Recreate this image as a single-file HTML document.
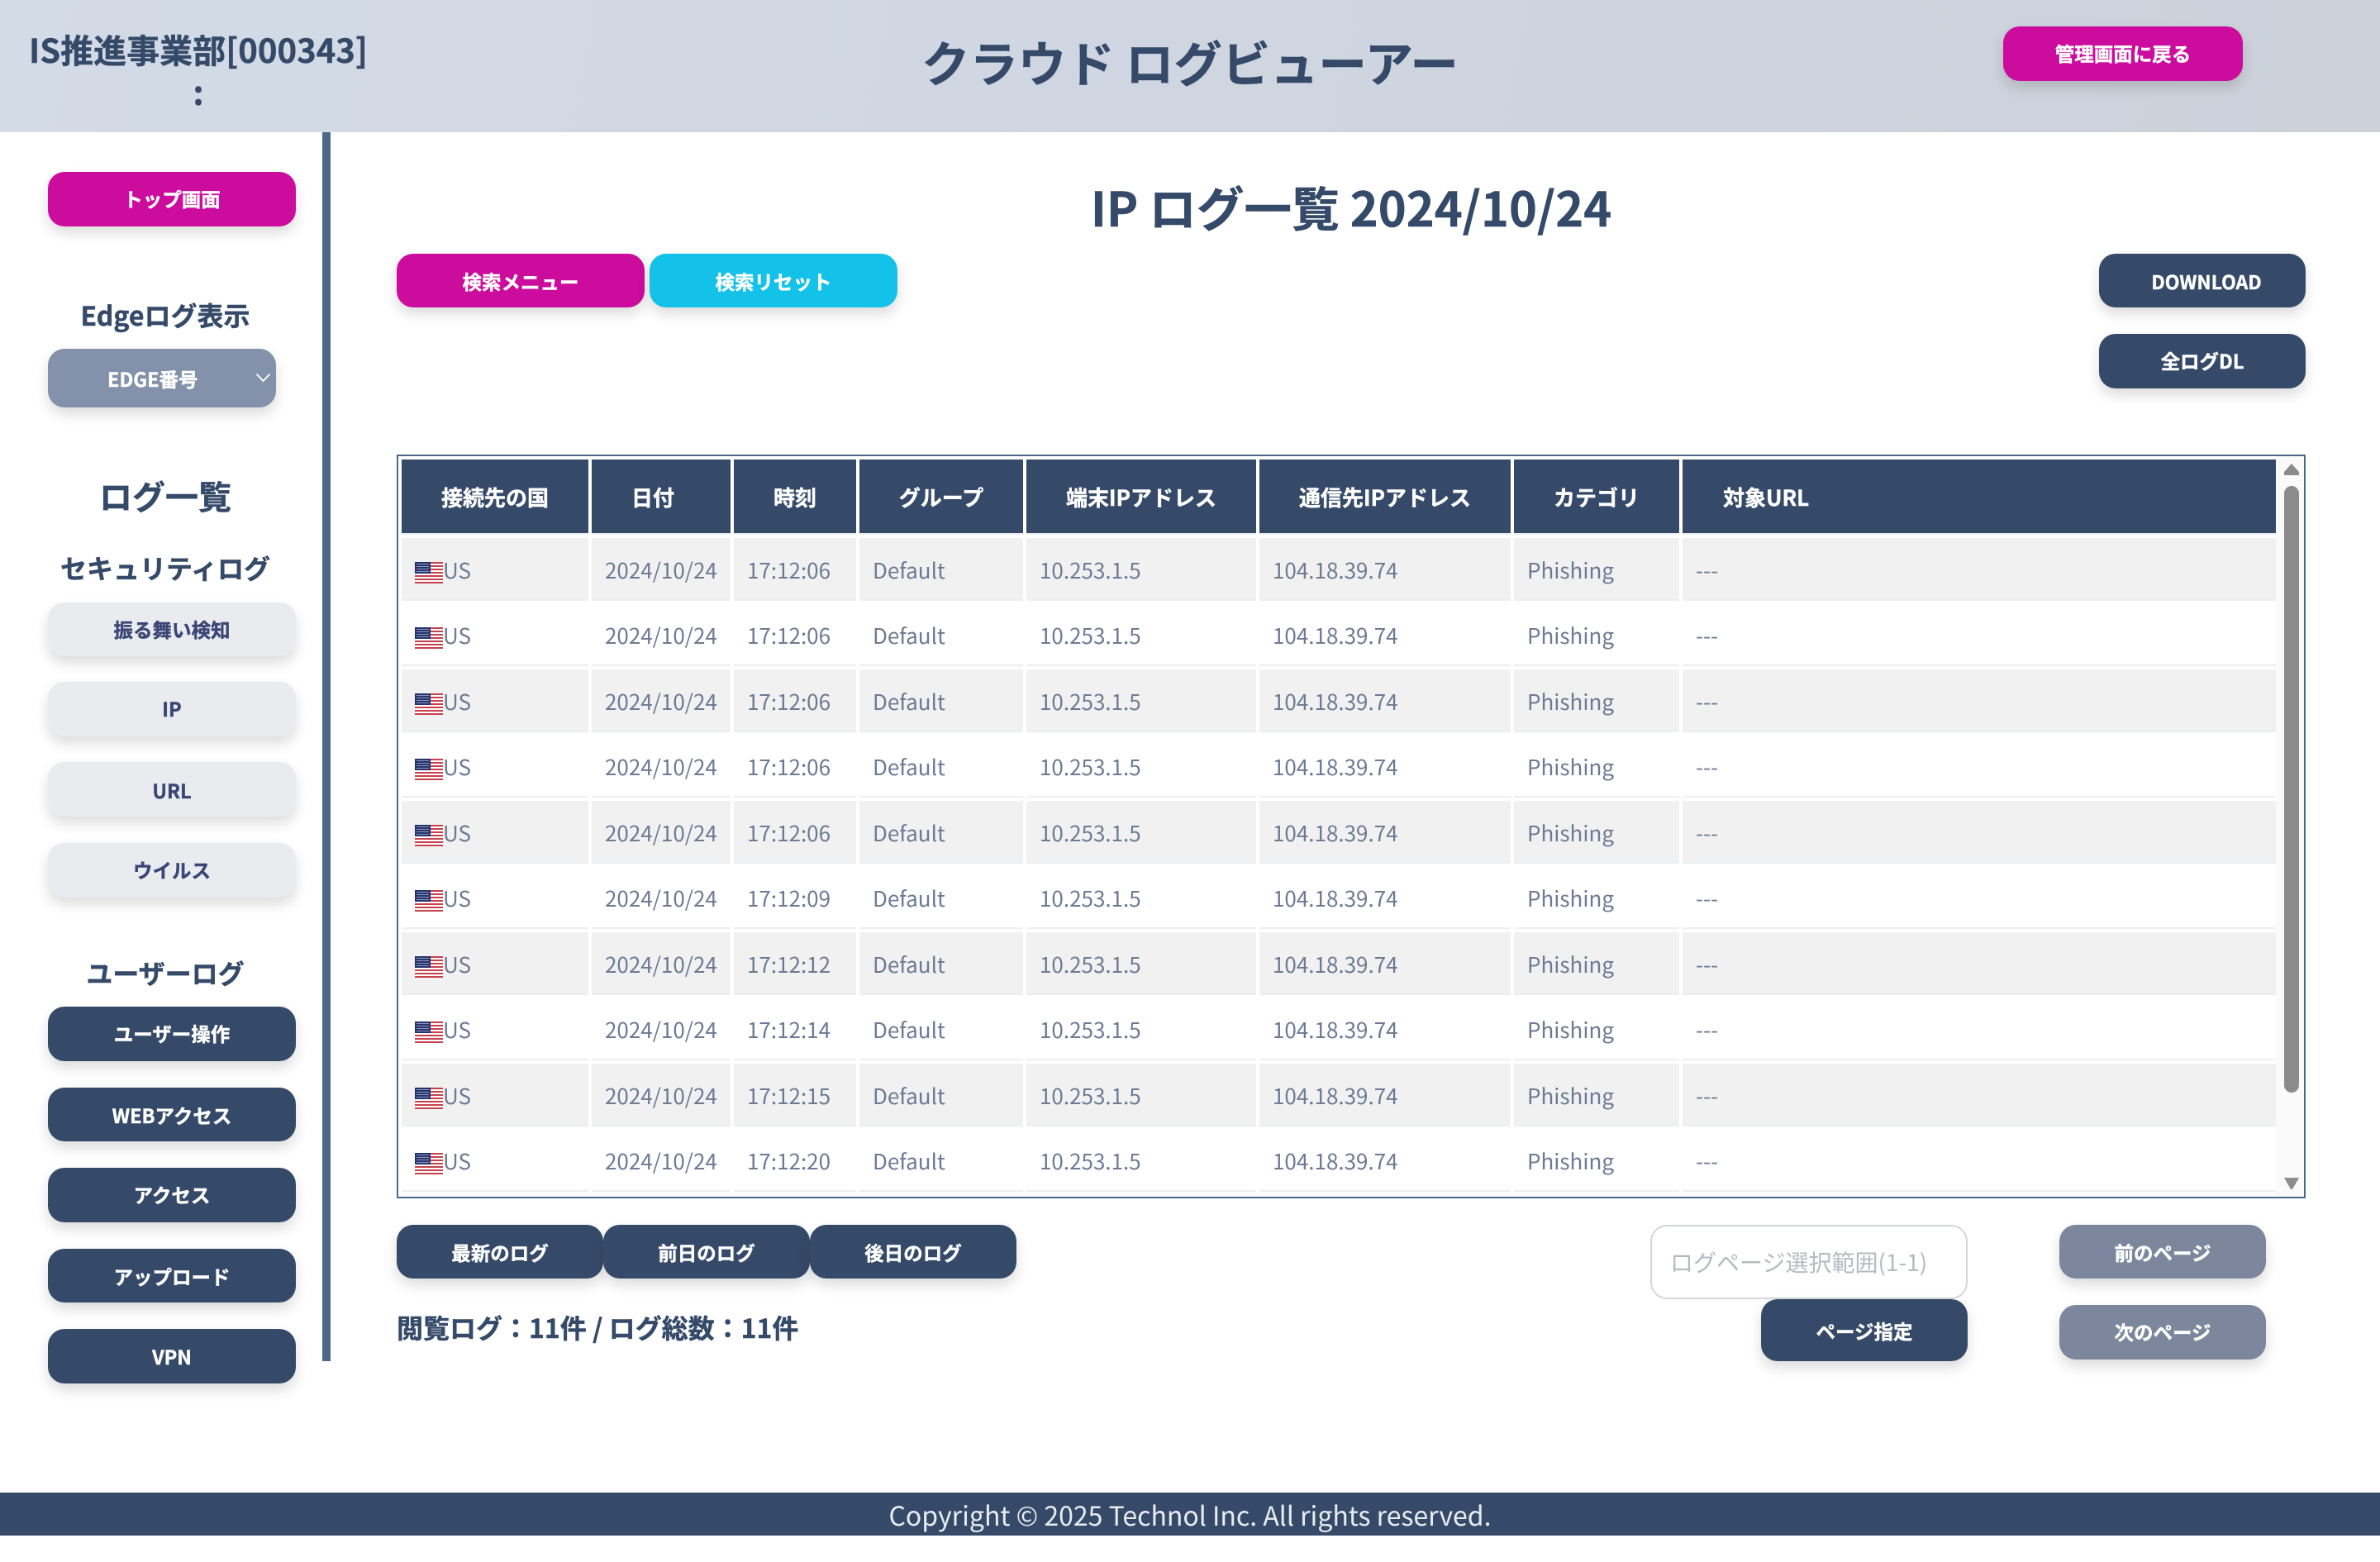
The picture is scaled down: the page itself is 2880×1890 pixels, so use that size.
<!DOCTYPE html>
<html lang="ja"><head><meta charset="utf-8"><title>クラウド ログビューアー</title>
<style>
*{box-sizing:border-box;margin:0;padding:0}
html,body{width:2880px;height:1890px;background:#fff;overflow:hidden}
body{position:relative;font-family:"Noto Sans CJK JP","Liberation Sans",sans-serif;color:#354a69}
.a{position:absolute}
.c{position:absolute;display:flex;align-items:center;justify-content:center;white-space:nowrap}
.h{color:#354a69;font-weight:700;-webkit-text-stroke:.4px currentColor}
.b{position:absolute;display:flex;align-items:center;justify-content:center;white-space:nowrap;font-size:23.5px;font-weight:700;color:#fff;border-radius:20px;box-shadow:0 8px 16px rgba(0,0,0,.14);-webkit-text-stroke:.4px currentColor}
.b span{position:relative;top:-1px}
.m{background:#cc0c9c}.n{background:#354a69}.l{background:#e9ebee;color:#3a4675}.g{background:#7c879d}
.box{position:absolute;left:480px;top:550px;width:2310px;height:900px;border:2px solid #4c6a88;overflow:hidden;background:#fff}
.sb{position:absolute;left:2272px;top:0;width:34px;height:896px;background:#fafafa}
table{position:absolute;left:0;top:0;border-collapse:separate;border-spacing:4px;table-layout:fixed;width:2276px}
th{height:91px;background:#354a69;color:#fff;font-size:26px;font-weight:700;border-bottom:2px solid #e9edf1;white-space:nowrap;padding:2px 0 0;-webkit-text-stroke:.4px currentColor}
td{height:75.5px;font-size:26px;color:#6c7a94;border-bottom:2px solid #ebeef1;padding:3px 0 0 16px;white-space:nowrap;font-weight:400}
tr.o td{background:#f1f1f1}
td svg{width:34px;height:26px;vertical-align:-6px;display:inline-block}
</style></head><body>
<svg width="0" height="0" style="position:absolute"><defs><symbol id="f" viewBox="0 0 34 26" preserveAspectRatio="none"><rect width="34" height="26" fill="#fff"/><g fill="#c8404c"><rect y="0" width="34" height="2"/><rect y="4" width="34" height="2"/><rect y="8" width="34" height="2"/><rect y="12" width="34" height="2"/><rect y="16" width="34" height="2"/><rect y="20" width="34" height="2"/><rect y="24" width="34" height="2"/></g><rect width="19" height="14" fill="#25346e"/><g fill="#8f96b8"><rect x="2" y="2" width="15" height="1"/><rect x="2" y="5" width="15" height="1"/><rect x="2" y="8" width="15" height="1"/><rect x="2" y="11" width="15" height="1"/></g></symbol></defs></svg>

<div class="a" style="left:0;top:0;width:2880px;height:160px;background:linear-gradient(100deg,#d3dbe7,#ccd1da)"></div>
<div class="c h" style="left:0;top:32px;width:480px;height:54px;font-size:40px">IS推進事業部[000343]</div>
<div class="c h" style="left:0;top:85px;width:480px;height:50px;font-size:40px">:</div>
<div class="c h" style="left:1000px;top:33px;width:880px;height:80px;font-size:58.4px">クラウド ログビューアー</div>
<div class="b m" style="left:2424px;top:32px;width:290px;height:66px"><span>管理画面に戻る</span></div>

<div class="a" style="left:390px;top:160px;width:10px;height:1487px;background:#4c6a88"></div>
<div class="b m" style="left:58px;top:208px;width:300px;height:66px"><span>トップ画面</span></div>
<div class="c h" style="left:0;top:357px;width:400px;height:48px;font-size:32px">Edgeログ表示</div>
<div class="b" style="left:58px;top:422px;width:276px;height:71px;background:#8491aa;justify-content:flex-start;padding-left:72px">EDGE番号</div>
<svg class="a" style="left:309px;top:451px" width="19" height="12" viewBox="0 0 19 12"><path d="M1.5 1.5L9.5 10L17.5 1.5" fill="none" stroke="#fff" stroke-width="1.8"/></svg>
<div class="c h" style="left:0;top:569px;width:400px;height:60px;font-size:40px">ログ一覧</div>
<div class="c h" style="left:0;top:662px;width:400px;height:50px;font-size:32px">セキュリティログ</div>
<div class="b l" style="left:58px;top:729px;width:300px;height:65px"><span>振る舞い検知</span></div>
<div class="b l" style="left:58px;top:825px;width:300px;height:66px"><span>IP</span></div>
<div class="b l" style="left:58px;top:922px;width:300px;height:66px;padding-top:2px">URL</div>
<div class="b l" style="left:58px;top:1020px;width:300px;height:66px"><span>ウイルス</span></div>
<div class="c h" style="left:0;top:1152px;width:400px;height:50px;font-size:32px">ユーザーログ</div>
<div class="b n" style="left:58px;top:1218px;width:300px;height:66px"><span>ユーザー操作</span></div>
<div class="b n" style="left:58px;top:1316px;width:300px;height:65px">WEBアクセス</div>
<div class="b n" style="left:58px;top:1413px;width:300px;height:66px"><span>アクセス</span></div>
<div class="b n" style="left:58px;top:1511px;width:300px;height:65px">アップロード</div>
<div class="b n" style="left:58px;top:1608px;width:300px;height:66px">VPN</div>

<div class="c h" style="left:1200px;top:207px;width:870px;height:84px;font-size:57.6px;font-weight:700">IP ログ一覧 2024/10/24</div>
<div class="b m" style="left:480px;top:307px;width:300px;height:65px">検索メニュー</div>
<div class="b" style="left:786px;top:307px;width:300px;height:65px;background:#14c1e8">検索リセット</div>
<div class="b n" style="left:2540px;top:307px;width:250px;height:65px;padding-left:10px;font-size:23px">DOWNLOAD</div>
<div class="b n" style="left:2540px;top:404px;width:250px;height:66px"><span>全ログDL</span></div>

<div class="box">
<div class="sb"></div>
<table>
<colgroup><col style="width:226px"><col style="width:168px"><col style="width:148px"><col style="width:198px"><col style="width:278px"><col style="width:304px"><col style="width:200px"><col style="width:718px"></colgroup>
<tr><th>接続先の国</th><th style="padding-right:20px">日付</th><th>時刻</th><th>グループ</th><th>端末IPアドレス</th><th>通信先IPアドレス</th><th>カテゴリ</th><th style="text-align:left;padding-left:49px">対象URL</th></tr>
<tr class="o"><td><svg><use href="#f"/></svg>US</td><td>2024/10/24</td><td>17:12:06</td><td>Default</td><td>10.253.1.5</td><td>104.18.39.74</td><td>Phishing</td><td>---</td></tr>
<tr><td><svg><use href="#f"/></svg>US</td><td>2024/10/24</td><td>17:12:06</td><td>Default</td><td>10.253.1.5</td><td>104.18.39.74</td><td>Phishing</td><td>---</td></tr>
<tr class="o"><td><svg><use href="#f"/></svg>US</td><td>2024/10/24</td><td>17:12:06</td><td>Default</td><td>10.253.1.5</td><td>104.18.39.74</td><td>Phishing</td><td>---</td></tr>
<tr><td><svg><use href="#f"/></svg>US</td><td>2024/10/24</td><td>17:12:06</td><td>Default</td><td>10.253.1.5</td><td>104.18.39.74</td><td>Phishing</td><td>---</td></tr>
<tr class="o"><td><svg><use href="#f"/></svg>US</td><td>2024/10/24</td><td>17:12:06</td><td>Default</td><td>10.253.1.5</td><td>104.18.39.74</td><td>Phishing</td><td>---</td></tr>
<tr><td><svg><use href="#f"/></svg>US</td><td>2024/10/24</td><td>17:12:09</td><td>Default</td><td>10.253.1.5</td><td>104.18.39.74</td><td>Phishing</td><td>---</td></tr>
<tr class="o"><td><svg><use href="#f"/></svg>US</td><td>2024/10/24</td><td>17:12:12</td><td>Default</td><td>10.253.1.5</td><td>104.18.39.74</td><td>Phishing</td><td>---</td></tr>
<tr><td><svg><use href="#f"/></svg>US</td><td>2024/10/24</td><td>17:12:14</td><td>Default</td><td>10.253.1.5</td><td>104.18.39.74</td><td>Phishing</td><td>---</td></tr>
<tr class="o"><td><svg><use href="#f"/></svg>US</td><td>2024/10/24</td><td>17:12:15</td><td>Default</td><td>10.253.1.5</td><td>104.18.39.74</td><td>Phishing</td><td>---</td></tr>
<tr><td><svg><use href="#f"/></svg>US</td><td>2024/10/24</td><td>17:12:20</td><td>Default</td><td>10.253.1.5</td><td>104.18.39.74</td><td>Phishing</td><td>---</td></tr>
</table>
</div>
<svg class="a" style="left:2764px;top:560px" width="18" height="16" viewBox="0 0 18 16"><path d="M9 1L18 11V15H0V11Z" fill="#8c8c8c"/></svg>
<div class="a" style="left:2764px;top:588px;width:18px;height:734px;background:#8c8c8c;border-radius:9px"></div>
<svg class="a" style="left:2764px;top:1425px" width="18" height="14" viewBox="0 0 18 14"><path d="M0 0H18L10 14H8Z" fill="#8c8c8c"/></svg>

<div class="b n" style="left:480px;top:1482px;width:250px;height:65px">最新のログ</div>
<div class="b n" style="left:730px;top:1482px;width:250px;height:65px">前日のログ</div>
<div class="b n" style="left:980px;top:1482px;width:250px;height:65px">後日のログ</div>
<div class="a h" style="left:480px;top:1584px;font-size:32px;line-height:44px;white-space:nowrap">閲覧ログ：11件 / ログ総数：11件</div>

<div class="a" style="left:1997px;top:1482px;width:384px;height:90px;border:2px solid #d3d6db;border-radius:20px;background:#fff"></div>
<div class="a" style="left:2021px;top:1506px;font-size:28px;line-height:42px;color:#b5bac2;white-space:nowrap;font-weight:400">ログページ選択範囲(1-1)</div>
<div class="b n" style="left:2131px;top:1572px;width:250px;height:75px">ページ指定</div>
<div class="b g" style="left:2492px;top:1482px;width:250px;height:65px">前のページ</div>
<div class="b g" style="left:2492px;top:1579px;width:250px;height:66px"><span>次のページ</span></div>

<div class="c" style="left:0;top:1806px;width:2880px;height:52px;background:#354a69;color:#e8ebef;font-size:32px;padding-top:2px">Copyright © 2025 Technol Inc. All rights reserved.</div>
</body></html>
